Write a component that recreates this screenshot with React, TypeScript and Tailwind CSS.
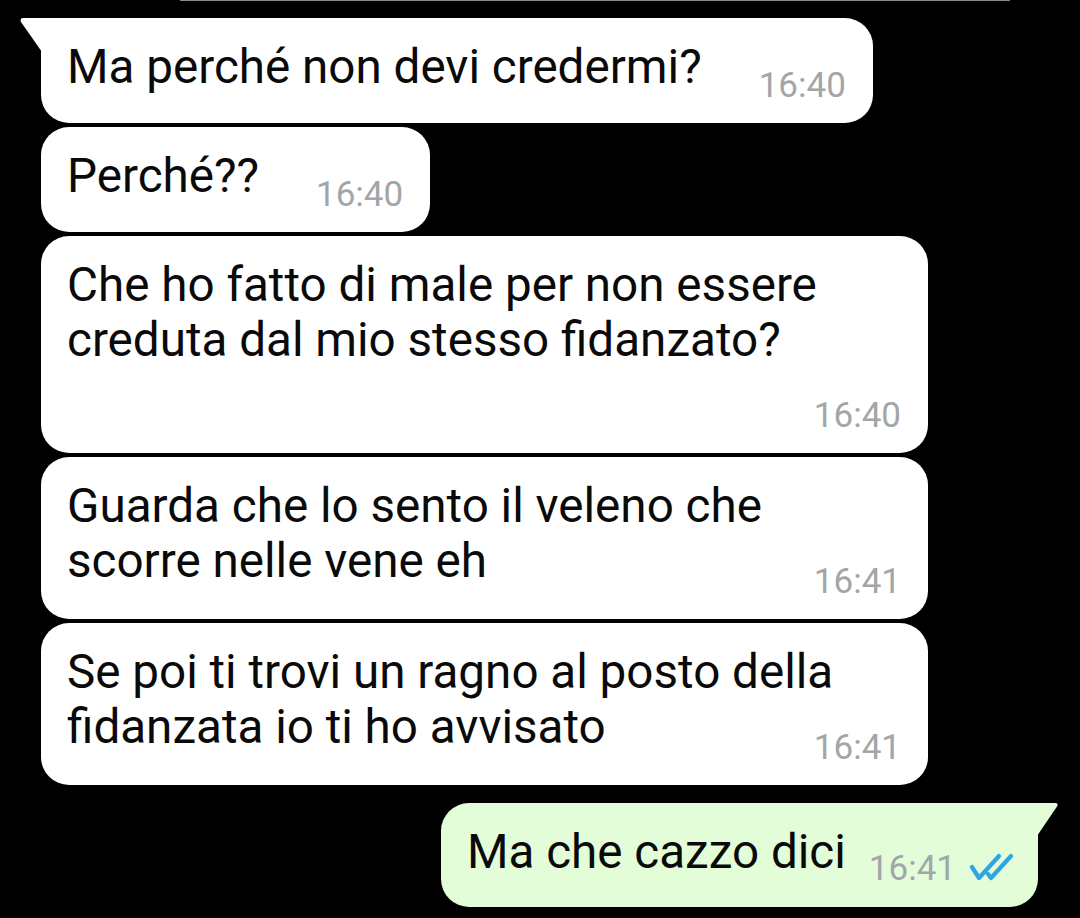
import * as React from "react";

const Time: React.FC<{t: string; className?: string}> = ({t, className = ""}) => (
    <span className={"text-[35px] leading-[40px] text-[#a3a6a8] whitespace-nowrap " + className}>{t}</span>
);

const InTail = () => (
    <svg className="absolute left-[-21px] top-0" width="22" height="34" viewBox="0 0 22 34">
        <path d="M3 0 L22 0 L22 34 L1 4 Q-0.5 0 3 0 Z" fill="#ffffff"/>
    </svg>
);

const OutTail = () => (
    <svg className="absolute right-[-21px] top-0" width="22" height="34" viewBox="0 0 22 34">
        <path d="M0 0 L18 0 Q22 0 20 3.5 L0 33 Z" fill="#e3fdd9"/>
    </svg>
);

const DoubleCheck = () => (
    <svg width="44" height="28" viewBox="0 0 44 28" fill="none" stroke="#2fa5e3" strokeWidth="4.2"
         strokeLinecap="round" strokeLinejoin="round">
        <path d="M3 14 L10 25 L30 3"/>
        <path d="M19 21 L22 25 L42 3"/>
    </svg>
);

// short message: text and time on one row
const ShortBubble: React.FC<{text: string; time: string; first?: boolean}> = ({text, time, first}) => (
    <div className={"relative self-start bg-white rounded-[28px] pl-[26px] pr-[27px] pt-[22px] pb-[17px] flex items-start " + (first ? "rounded-tl-none" : "")}>
        {first && <InTail/>}
        <p className="text-[47.6px] leading-[55px] text-[#0a0a0a] whitespace-nowrap">{text}</p>
        <Time t={time} className="ml-[57px] mt-[26px]"/>
    </div>
);

// long message: wraps, time sits under or beside the last line
const LongBubble: React.FC<{lines: string[]; time: string; ownRow?: boolean}> = ({lines, time, ownRow}) => (
    <div className="self-start w-[887px] bg-white rounded-[28px] pl-[26px] pr-[27px] pt-[22px] pb-[17px]">
        <p className="text-[47.6px] leading-[55px] text-[#0a0a0a]">
            {lines.map((l, i) => (
                <React.Fragment key={i}>{l}{i < lines.length - 1 && <br/>}</React.Fragment>
            ))}
        </p>
        <div className={"flex justify-end " + (ownRow ? "mt-[28px]" : "-mt-[27px]")}>
            <Time t={time}/>
        </div>
    </div>
);

export default function App() {
    return (
        <div className="w-[1080px] h-[918px] bg-black overflow-hidden flex flex-col font-['Roboto',sans-serif]">
            {/* edge of the previous message */}
            <div className="h-px ml-[180px] w-[830px] bg-[#858f80]"/>

            <div className="flex flex-col gap-[4px] pl-[41px] mt-[17px]">
                <ShortBubble text="Ma perché non devi credermi?" time="16:40" first/>
                <ShortBubble text="Perché??" time="16:40"/>
                <LongBubble lines={["Che ho fatto di male per non essere", "creduta dal mio stesso fidanzato?"]} time="16:40" ownRow/>
                <LongBubble lines={["Guarda che lo sento il veleno che", "scorre nelle vene eh"]} time="16:41"/>
                <LongBubble lines={["Se poi ti trovi un ragno al posto della", "fidanzata io ti ho avvisato"]} time="16:41"/>
            </div>

            <div className="relative self-end mr-[42px] mt-[18px] bg-[#e3fdd9] rounded-[28px] rounded-tr-none pl-[26px] pr-[25px] pt-[22px] pb-[18px] flex items-start">
                <OutTail/>
                <p className="text-[47.6px] leading-[55px] text-[#0a0a0a] whitespace-nowrap">Ma che cazzo dici</p>
                <Time t="16:41" className="ml-[23px] mt-[24px]"/>
                <div className="ml-[13px] mt-[28px]">
                    <DoubleCheck/>
                </div>
            </div>
        </div>
    );
}
